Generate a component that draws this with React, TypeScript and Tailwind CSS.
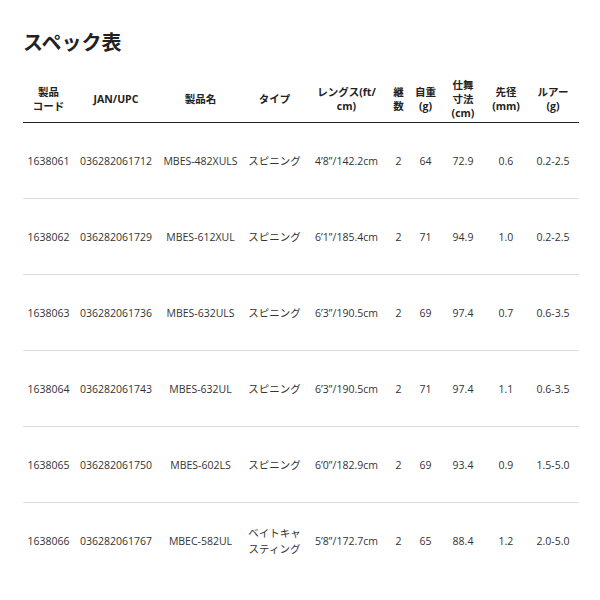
const rows = [
  ["1638061", "036282061712", "MBES-482XULS", "スピニング", "4’8”/142.2cm", "2", "64", "72.9", "0.6", "0.2-2.5"],
  ["1638062", "036282061729", "MBES-612XUL", "スピニング", "6’1”/185.4cm", "2", "71", "94.9", "1.0", "0.2-2.5"],
  ["1638063", "036282061736", "MBES-632ULS", "スピニング", "6’3”/190.5cm", "2", "69", "97.4", "0.7", "0.6-3.5"],
  ["1638064", "036282061743", "MBES-632UL", "スピニング", "6’3”/190.5cm", "2", "71", "97.4", "1.1", "0.6-3.5"],
  ["1638065", "036282061750", "MBES-602LS", "スピニング", "6’0”/182.9cm", "2", "69", "93.4", "0.9", "1.5-5.0"],
  ["1638066", "036282061767", "MBEC-582UL", "ベイトキャスティング", "5’8”/172.7cm", "2", "65", "88.4", "1.2", "2.0-5.0"],
];

// header lines, broken as in the original
const headers = [
  ["製品", "コード"],
  ["JAN/UPC"],
  ["製品名"],
  ["タイプ"],
  ["レングス(ft/", "cm)"],
  ["継", "数"],
  ["自重", "(g)"],
  ["仕舞", "寸法", "(cm)"],
  ["先径", "(mm)"],
  ["ルアー", "(g)"],
];

const widths = ["w-[51px]", "w-[84px]", "w-[85px]", "w-[63px]", "w-[81px]", "w-[23px]", "w-[31px]", "w-[44px]", "w-[42px]", "w-[52px]"];

export default function App() {
  return (
    <div className="w-[600px] h-[600px] bg-white text-[#333] font-['Open_Sans','Noto_Sans_CJK_JP',sans-serif]">
      <div className="px-[23px] pt-[28px]">
        <h2 className="text-[20px] font-bold leading-[28px] text-[#222] font-['Noto_Sans_CJK_JP',sans-serif]">スペック表</h2>
        <table className="mt-[18px] w-[556px] table-fixed border-collapse text-[10.5px]">
          <colgroup>
            {widths.map((w, i) => (
              <col key={i} className={w} />
            ))}
          </colgroup>
          <thead>
            <tr className="border-b-[1.5px] border-[#222]">
              {headers.map((h, i) => (
                <th key={i} className="px-[2px] pt-[4px] pb-[2px] h-[48px] font-bold text-center align-middle leading-[14px] text-[#222] whitespace-nowrap">
                  {h.map((line, li) => (
                    <div key={li}>{line}</div>
                  ))}
                </th>
              ))}
            </tr>
          </thead>
          <tbody>
            {rows.map((r, ri) => (
              <tr key={ri} className={ri < rows.length - 1 ? "border-b border-[#ddd]" : ""}>
                {r.map((c, ci) => (
                  <td key={ci} className="h-[76px] pt-[1px] px-[4px] text-center align-middle leading-[16px] whitespace-normal break-all">
                    {c}
                  </td>
                ))}
              </tr>
            ))}
          </tbody>
        </table>
      </div>
    </div>
  );
}
